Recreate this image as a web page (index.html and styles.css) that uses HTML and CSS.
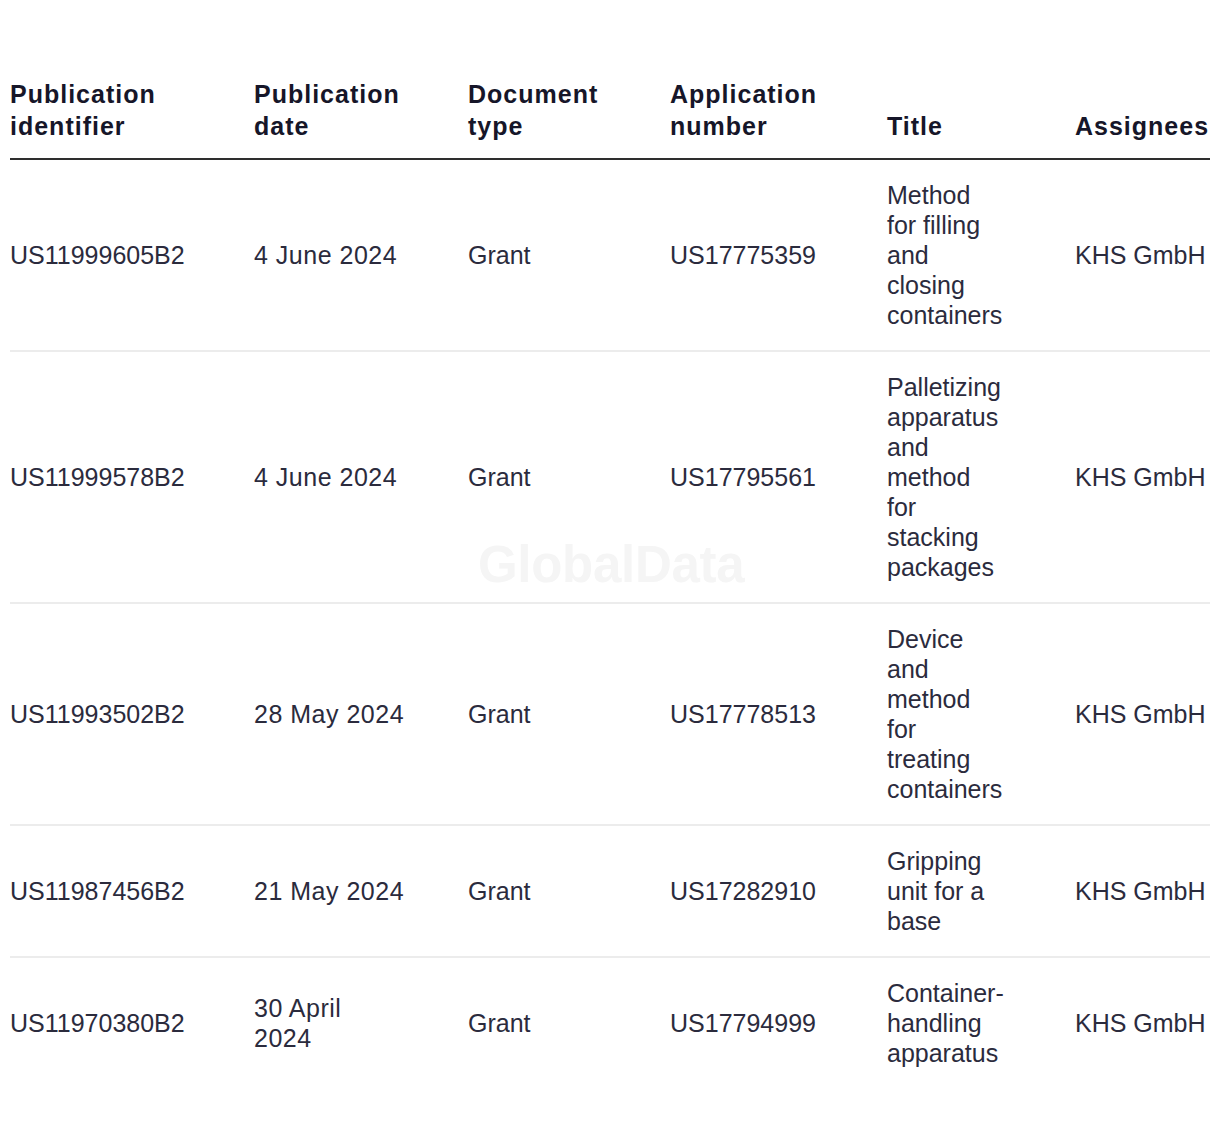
FILE: index.html
```html
<!DOCTYPE html>
<html>
<head>
<meta charset="utf-8">
<link rel="stylesheet" href="styles.css">
</head>
<body>
<div class="wrap">
  <table class="patents">
    <colgroup>
      <col class="c1"><col class="c2"><col class="c3"><col class="c4"><col class="c5"><col class="c6">
    </colgroup>
    <thead>
      <tr>
        <th>Publication identifier</th>
        <th class="date">Publication date</th>
        <th>Document type</th>
        <th>Application number</th>
        <th class="title">Title</th>
        <th class="last">Assignees</th>
      </tr>
    </thead>
    <tbody>
      <tr>
        <td>US11999605B2</td>
        <td class="date">4 June 2024</td>
        <td>Grant</td>
        <td>US17775359</td>
        <td class="title">Method for filling and closing containers</td>
        <td class="last">KHS GmbH</td>
      </tr>
      <tr>
        <td>US11999578B2</td>
        <td class="date">4 June 2024</td>
        <td>Grant</td>
        <td>US17795561</td>
        <td class="title">Palletizing apparatus and method for stacking packages</td>
        <td class="last">KHS GmbH</td>
      </tr>
      <tr>
        <td>US11993502B2</td>
        <td class="date">28 May 2024</td>
        <td>Grant</td>
        <td>US17778513</td>
        <td class="title">Device and method for treating containers</td>
        <td class="last">KHS GmbH</td>
      </tr>
      <tr>
        <td>US11987456B2</td>
        <td class="date">21 May 2024</td>
        <td>Grant</td>
        <td>US17282910</td>
        <td class="title">Gripping unit for a base</td>
        <td class="last">KHS GmbH</td>
      </tr>
      <tr>
        <td>US11970380B2</td>
        <td class="date">30 April 2024</td>
        <td>Grant</td>
        <td>US17794999</td>
        <td class="title">Container-handling apparatus</td>
        <td class="last">KHS GmbH</td>
      </tr>
    </tbody>
  </table>
  <div class="watermark">GlobalData</div>
</div>
</body>
</html>
```

FILE: styles.css
```css
html, body {
  margin: 0;
  padding: 0;
  background: #ffffff;
}

body {
  font-family: "Liberation Sans", Arial, sans-serif;
  color: #2b2b3d;
}

.wrap {
  position: relative;
  padding: 78px 10px 40px 10px;
}

.patents {
  width: 1200px;
  border-collapse: collapse;
  table-layout: fixed;
}

.c1 { width: 244px; }
.c2 { width: 214px; }
.c3 { width: 202px; }
.c4 { width: 217px; }
.c5 { width: 188px; }
.c6 { width: 135px; }

.patents th {
  font-size: 25px;
  font-weight: 700;
  line-height: 32px;
  color: #161629;
  text-align: left;
  vertical-align: bottom;
  padding: 0 40px 16px 0;
  letter-spacing: 1px;
  border-bottom: 2px solid #2e2e2e;
}

.patents td {
  font-size: 25px;
  line-height: 30px;
  color: #2b2b3d;
  vertical-align: middle;
  padding: 20px 64px 20px 0;
  border-bottom: 2px solid #ececec;
}

.patents td.date {
  padding-right: 63px;
  letter-spacing: 0.5px;
}

.patents td.title {
  padding-right: 70px;
}

.patents tbody tr:last-child td {
  border-bottom: none;
}

.patents .last {
  padding-right: 0;
  white-space: nowrap;
}

.watermark {
  position: absolute;
  left: 478px;
  top: 539px;
  font-size: 51px;
  line-height: 1;
  font-weight: 700;
  color: #f5f5f5;
  letter-spacing: -0.3px;
  pointer-events: none;
}
```
